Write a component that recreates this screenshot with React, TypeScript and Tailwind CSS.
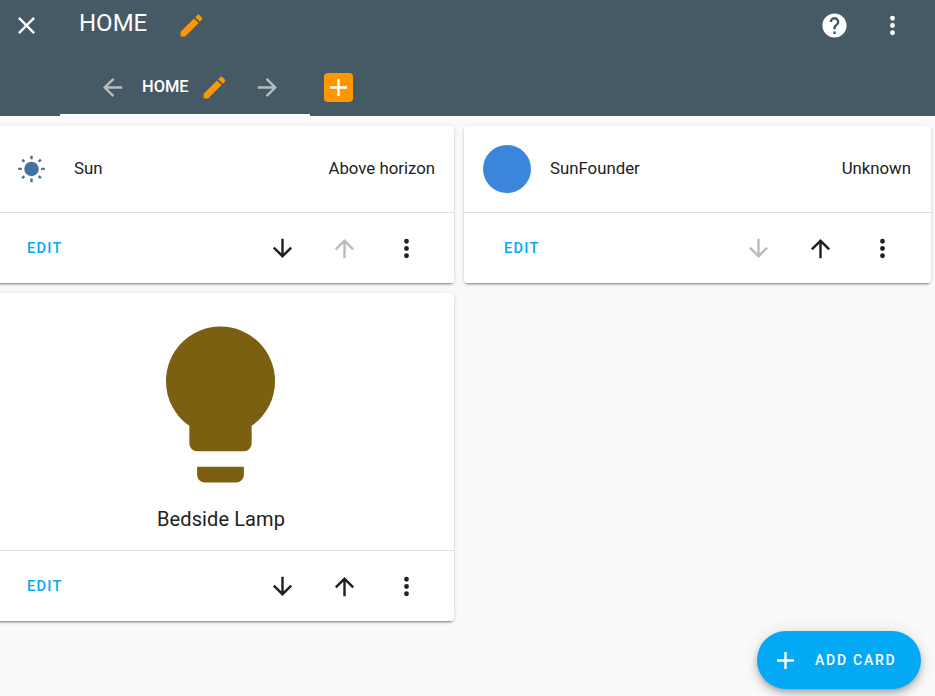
const mdi = {
  pencil: 'M20.71,7.04C21.1,6.65 21.1,6 20.71,5.63L18.37,3.29C18,2.9 17.35,2.9 16.96,3.29L15.12,5.12L18.87,8.87M3,17.25V21H6.75L17.81,9.93L14.06,6.18L3,17.25Z',
  close: 'M19,6.41L17.59,5L12,10.59L6.41,5L5,6.41L10.59,12L5,17.59L6.41,19L12,13.41L17.59,19L19,17.59L13.41,12L19,6.41Z',
  help: 'M15.07,11.25L14.17,12.17C13.45,12.89 13,13.5 13,15H11V14.5C11,13.39 11.45,12.39 12.17,11.67L13.41,10.41C13.78,10.05 14,9.55 14,9C14,7.89 13.1,7 12,7A2,2 0 0,0 10,9H8A4,4 0 0,1 12,5A4,4 0 0,1 16,9C16,9.88 15.64,10.67 15.07,11.25M13,19H11V17H13M12,2A10,10 0 0,0 2,12A10,10 0 0,0 12,22A10,10 0 0,0 22,12C22,6.47 17.5,2 12,2Z',
  dots: 'M12,16A2,2 0 0,1 14,18A2,2 0 0,1 12,20A2,2 0 0,1 10,18A2,2 0 0,1 12,16M12,10A2,2 0 0,1 14,12A2,2 0 0,1 12,14A2,2 0 0,1 10,12A2,2 0 0,1 12,10M12,4A2,2 0 0,1 14,6A2,2 0 0,1 12,8A2,2 0 0,1 10,6A2,2 0 0,1 12,4Z',
  left: 'M20,11V13H8L13.5,18.5L12.08,19.92L4.16,12L12.08,4.08L13.5,5.5L8,11H20Z',
  right: 'M4,11V13H16L10.5,18.5L11.92,19.92L19.84,12L11.92,4.08L10.5,5.5L16,11H4Z',
  up: 'M13,20H11V8L5.5,13.5L4.08,12.08L12,4.16L19.92,12.08L18.5,13.5L13,8V20Z',
  down: 'M11,4H13V16L18.5,10.5L19.92,11.92L12,19.84L4.08,11.92L5.5,10.5L11,16V4Z',
  plus: 'M19,13H13V19H11V13H5V11H11V5H13V11H19V13Z',
  sun: 'M3.55,18.54L4.96,19.95L6.76,18.16L5.34,16.74M11,22.45C11.32,22.45 13,22.45 13,22.45V19.5H11M12,5.5A6,6 0 0,0 6,11.5A6,6 0 0,0 12,17.5A6,6 0 0,0 18,11.5C18,8.18 15.31,5.5 12,5.5M20,12.5H23V10.5H20M17.24,18.16L19.04,19.95L20.45,18.54L18.66,16.74M20.45,4.46L19.04,3.05L17.24,4.84L18.66,6.26M13,0.55H11V3.5H13M4,10.5H1V12.5H4M6.76,4.84L4.96,3.05L3.55,4.46L5.34,6.26L6.76,4.84Z',
  bulb: 'M12,2A7,7 0 0,0 5,9C5,11.38 6.19,13.47 8,14.74V17A1,1 0 0,0 9,18H15A1,1 0 0,0 16,17V14.74C17.81,13.47 19,11.38 19,9A7,7 0 0,0 12,2M9,21A1,1 0 0,0 10,22H14A1,1 0 0,0 15,21V20H9V21Z',
}

function Icon({ d, className }: { d: string; className?: string }) {
  return (
    <svg viewBox="0 0 24 24" fill="currentColor" className={`shrink-0 ${className ?? 'h-[29px] w-[29px]'}`}>
      <path d={d} />
    </svg>
  )
}

const cardShadow =
  'shadow-[0_2px_2px_0_rgba(0,0,0,0.14),0_1px_5px_0_rgba(0,0,0,0.12),0_3px_1px_-2px_rgba(0,0,0,0.25)]'

function CardActions({ downOff, upOff, leftCol }: { downOff?: boolean; upOff?: boolean; leftCol?: boolean }) {
  return (
    <div
      className={`flex h-[71px] items-center rounded-b border-t border-[#e0e0e0] bg-white ${
        leftCol ? 'pl-[39px] pr-[33px]' : 'pl-10 pr-[34px]'
      }`}
    >
      <span className="mt-[2px] text-[14.5px] font-medium tracking-[1.3px] text-[#03a9f4]">EDIT</span>
      <div className="ml-auto flex items-center gap-[33px]">
        <Icon d={mdi.down} className={`h-[29px] w-[29px] ${downOff ? 'text-[#bdbdbd]' : 'text-[#212121]'}`} />
        <Icon d={mdi.up} className={`h-[29px] w-[29px] ${upOff ? 'text-[#bdbdbd]' : 'text-[#212121]'}`} />
        <Icon d={mdi.dots} className="h-[29px] w-[29px] text-[#212121]" />
      </div>
    </div>
  )
}

function EntityRow({ name, state, badge, leftCol }: { name: string; state: string; badge: React.ReactNode; leftCol?: boolean }) {
  return (
    <div className={`flex h-[86px] items-center text-[16.8px] text-[#212121] ${leftCol ? 'pr-[19px]' : 'pr-5'}`}>
      <div className="flex w-[86px] shrink-0 justify-center">{badge}</div>
      <span>{name}</span>
      <span className="ml-auto">{state}</span>
    </div>
  )
}

export default function App() {
  return (
    <div className="relative h-screen w-full overflow-hidden bg-[#fafafa] font-['Roboto',sans-serif]">
      <header className="h-[116px] bg-[#455a64] text-white">
        <div className="flex h-[50px] items-center pl-3 pr-[28px]">
          <Icon d={mdi.close} />
          <span className="mb-1 ml-[38px] text-[24px] leading-none">HOME</span>
          <Icon d={mdi.pencil} className="ml-[30px] h-[29px] w-[29px] text-[#ff9800]" />
          <Icon d={mdi.help} className="ml-auto h-[29px] w-[29px]" />
          <Icon d={mdi.dots} className="ml-[29px] h-[29px] w-[29px]" />
        </div>
        <div className="flex h-[66px] items-start pl-[60px] pt-[7px]">
          <div className="flex h-[59px] w-[250px] items-center border-b-2 border-white pl-[38px] pt-1">
            <Icon d={mdi.left} className="h-[29px] w-[29px] text-white/60" />
            <span className="ml-[15px] text-[16.4px] font-medium">HOME</span>
            <Icon d={mdi.pencil} className="ml-[11px] h-[29px] w-[29px] text-[#ff9800]" />
            <Icon d={mdi.right} className="ml-[24px] h-[29px] w-[29px] text-white/60" />
          </div>
          <div className="ml-[14px] mt-4 flex h-[29px] w-[29px] items-center justify-center rounded bg-[#ff9800]">
            <Icon d={mdi.plus} />
          </div>
        </div>
      </header>

      <main className="ml-[-12px] mt-[10px] grid w-[943px] grid-cols-[466px_467px] items-start gap-x-[10px]">
        <div className="flex flex-col gap-[10px]">
          <div className={`rounded bg-white ${cardShadow}`}>
            <EntityRow
              leftCol
              name="Sun"
              state="Above horizon"
              badge={<Icon d={mdi.sun} className="h-[29px] w-[29px] text-[#44739e]" />}
            />
            <CardActions upOff leftCol />
          </div>
          <div className={`rounded bg-white ${cardShadow}`}>
            <div className="flex h-[257px] flex-col items-center pt-[18px]">
              <Icon d={mdi.bulb} className="mr-[2px] h-[187px] w-[187px] text-[#7d5f11]" />
              <span className="mt-[6px] text-[20px] tracking-[0.1px] text-[#212121]">Bedside Lamp</span>
            </div>
            <CardActions leftCol />
          </div>
        </div>
        <div className={`rounded bg-white ${cardShadow}`}>
          <EntityRow
            name="SunFounder"
            state="Unknown"
            badge={<div className="h-12 w-12 rounded-full bg-[#3b85dc]" />}
          />
          <CardActions downOff />
        </div>
      </main>

      <button
        type="button"
        className="absolute bottom-[7px] right-[14px] flex h-[58px] w-[164px] items-center rounded-full bg-[#03a9f4] pl-[14px] text-white shadow-[0_3px_5px_-1px_rgba(0,0,0,0.2),0_6px_10px_0_rgba(0,0,0,0.14),0_1px_18px_0_rgba(0,0,0,0.12)]"
      >
        <Icon d={mdi.plus} />
        <span className="ml-[15px] text-[14px] font-medium tracking-[1.75px]">ADD CARD</span>
      </button>
    </div>
  )
}
